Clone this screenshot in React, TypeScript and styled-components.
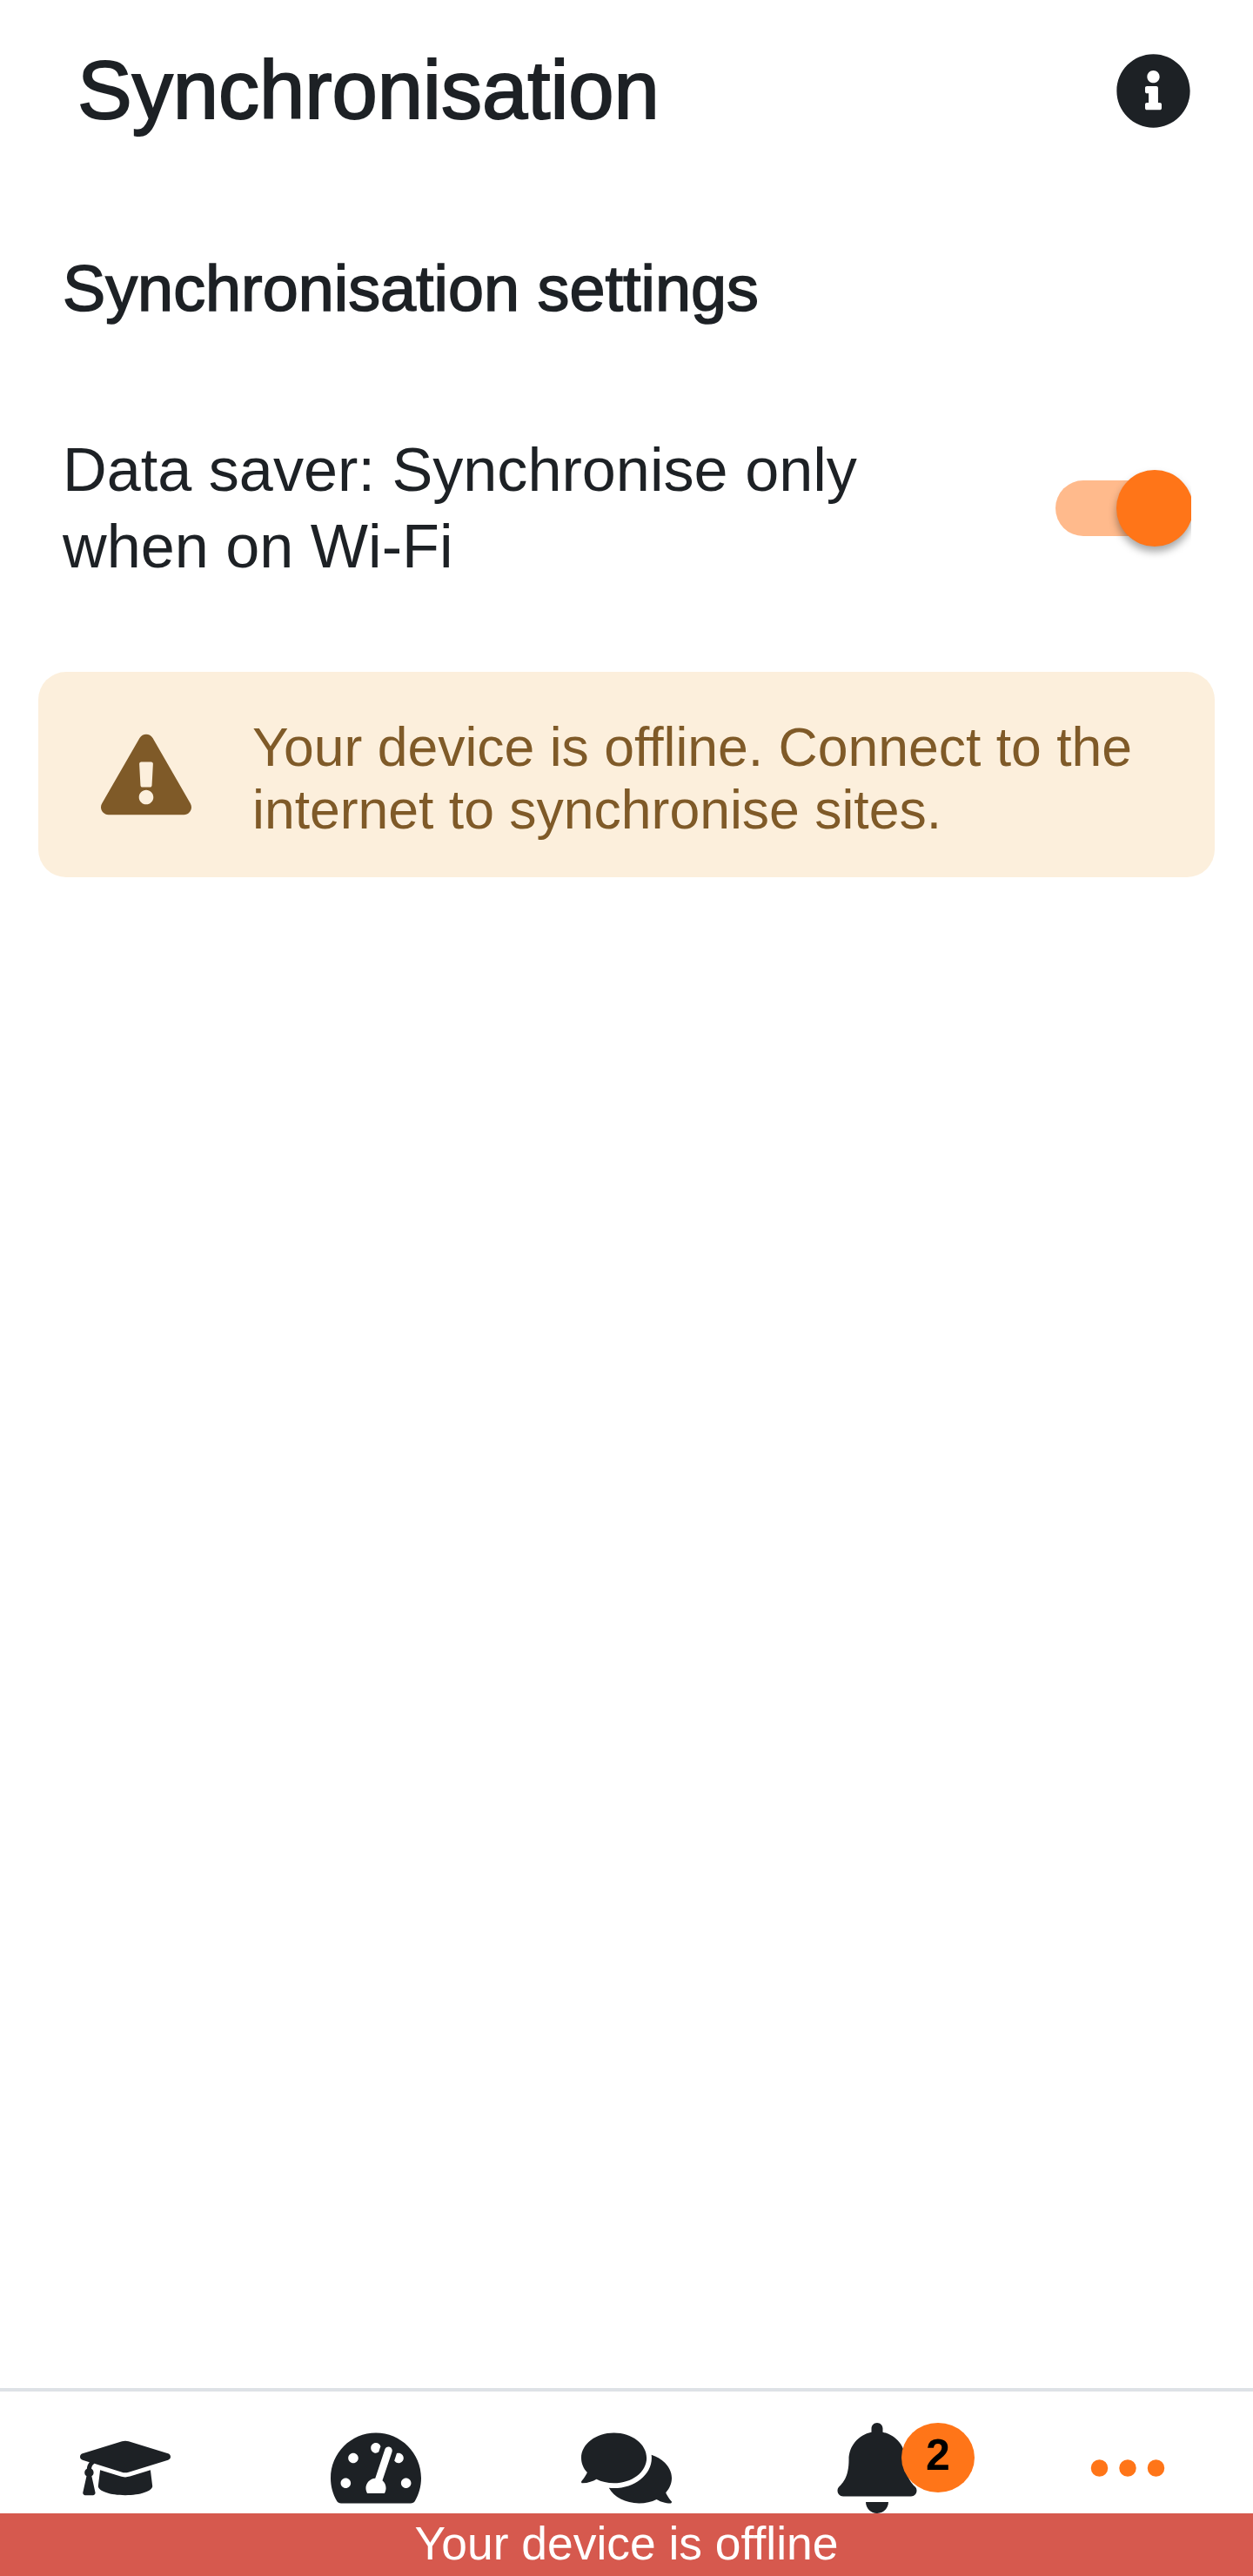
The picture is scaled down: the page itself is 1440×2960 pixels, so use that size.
import React from "react";
import styled, { createGlobalStyle } from "styled-components";
import {
  FaBell,
  FaComments,
  FaExclamationTriangle,
  FaGraduationCap,
  FaInfoCircle,
  FaTachometerAlt,
} from "react-icons/fa";
import { IoEllipsisHorizontal } from "react-icons/io5";

const GlobalStyle = createGlobalStyle`
  html, body {
    margin: 0;
    padding: 0;
    background: #fff;
  }
  body {
    font-family: "Liberation Sans", Arial, sans-serif;
    color: #1d2125;
  }
`;

const Page = styled.div`
  display: flex;
  flex-direction: column;
  width: 1440px;
  height: 2960px;
  overflow: hidden;
`;

const Header = styled.header`
  display: flex;
  align-items: center;
  justify-content: space-between;
  height: 208px;
  padding: 0 71px 0 89px;
  flex: none;
`;

const Title = styled.h1`
  margin: 0;
  font-size: 94px;
  line-height: 1;
  font-weight: 400;
  -webkit-text-stroke: 2px #1d2125;
`;

const Content = styled.main`
  flex: 1;
`;

const SectionTitle = styled.h2`
  margin: 0;
  padding: 82px 72px 0;
  height: 288px;
  box-sizing: border-box;
  font-size: 73.8px;
  line-height: 84px;
  font-weight: 400;
  -webkit-text-stroke: 1.6px #1d2125;
`;

const SettingRow = styled.div`
  display: flex;
  align-items: center;
  justify-content: space-between;
  padding: 0 71px 0 72px;
`;

const SettingLabel = styled.div`
  width: 1000px;
  font-size: 70.2px;
  line-height: 88px;
`;

const ToggleClip = styled.div`
  width: 156px;
  height: 120px;
  overflow: hidden;
  position: relative;
`;

const ToggleTrack = styled.div`
  position: absolute;
  left: 0;
  top: 28px;
  width: 136px;
  height: 64px;
  border-radius: 32px;
  background: #ffba8c;
`;

const ToggleKnob = styled.div`
  position: absolute;
  left: 70px;
  top: 16px;
  width: 88px;
  height: 88px;
  border-radius: 50%;
  background: #ff7518;
  box-shadow: 0 6px 10px rgba(0, 0, 0, 0.35);
`;

const Alert = styled.div`
  display: flex;
  align-items: center;
  gap: 70px;
  margin: 100px 44px 0;
  padding: 0 72px;
  height: 236px;
  border-radius: 32px;
  background: #fcefdc;
  color: #7f5a28;
  font-size: 62.5px;
  line-height: 72px;
`;

const AlertIcon = styled(FaExclamationTriangle)`
  flex: none;
`;

const AlertText = styled.div`
  padding-top: 8px;
`;

const TabBar = styled.nav`
  display: flex;
  flex: none;
  height: 140px;
  border-top: 4px solid #dee2e6;
`;

const Tab = styled.div<{ $active?: boolean }>`
  flex: 1;
  display: flex;
  justify-content: center;
  padding-top: 36px;
  color: ${(p) => (p.$active ? "#ff7518" : "#1d2125")};
`;

const IconBox = styled.div`
  position: relative;
  width: 104px;
  height: 104px;
`;

const Badge = styled.span`
  position: absolute;
  left: 80px;
  top: 0;
  width: 84px;
  height: 80px;
  border-radius: 50%;
  background: #ff7518;
  color: #000;
  font-size: 50px;
  font-weight: 700;
  line-height: 74px;
  text-align: center;
`;

const OfflineBar = styled.div`
  flex: none;
  height: 72px;
  background: #d6594e;
  color: #fff;
  font-size: 53.4px;
  line-height: 70px;
  text-align: center;
`;

export default function App() {
  return (
    <Page>
      <GlobalStyle />
      <Header>
        <Title>Synchronisation</Title>
        <FaInfoCircle size={87} />
      </Header>
      <Content>
        <SectionTitle>Synchronisation settings</SectionTitle>
        <SettingRow>
          <SettingLabel>Data saver: Synchronise only when on Wi-Fi</SettingLabel>
          <ToggleClip>
            <ToggleTrack />
            <ToggleKnob />
          </ToggleClip>
        </SettingRow>
        <Alert>
          <AlertIcon size={104} />
          <AlertText>Your device is offline. Connect to the internet to synchronise sites.</AlertText>
        </Alert>
      </Content>
      <TabBar>
        <Tab>
          <IconBox>
            <FaGraduationCap size={104} />
          </IconBox>
        </Tab>
        <Tab>
          <IconBox>
            <FaTachometerAlt size={104} />
          </IconBox>
        </Tab>
        <Tab>
          <IconBox>
            <FaComments size={104} />
          </IconBox>
        </Tab>
        <Tab>
          <IconBox>
            <FaBell size={104} />
            <Badge>2</Badge>
          </IconBox>
        </Tab>
        <Tab $active>
          <IconBox>
            <IoEllipsisHorizontal size={104} />
          </IconBox>
        </Tab>
      </TabBar>
      <OfflineBar>Your device is offline</OfflineBar>
    </Page>
  );
}
